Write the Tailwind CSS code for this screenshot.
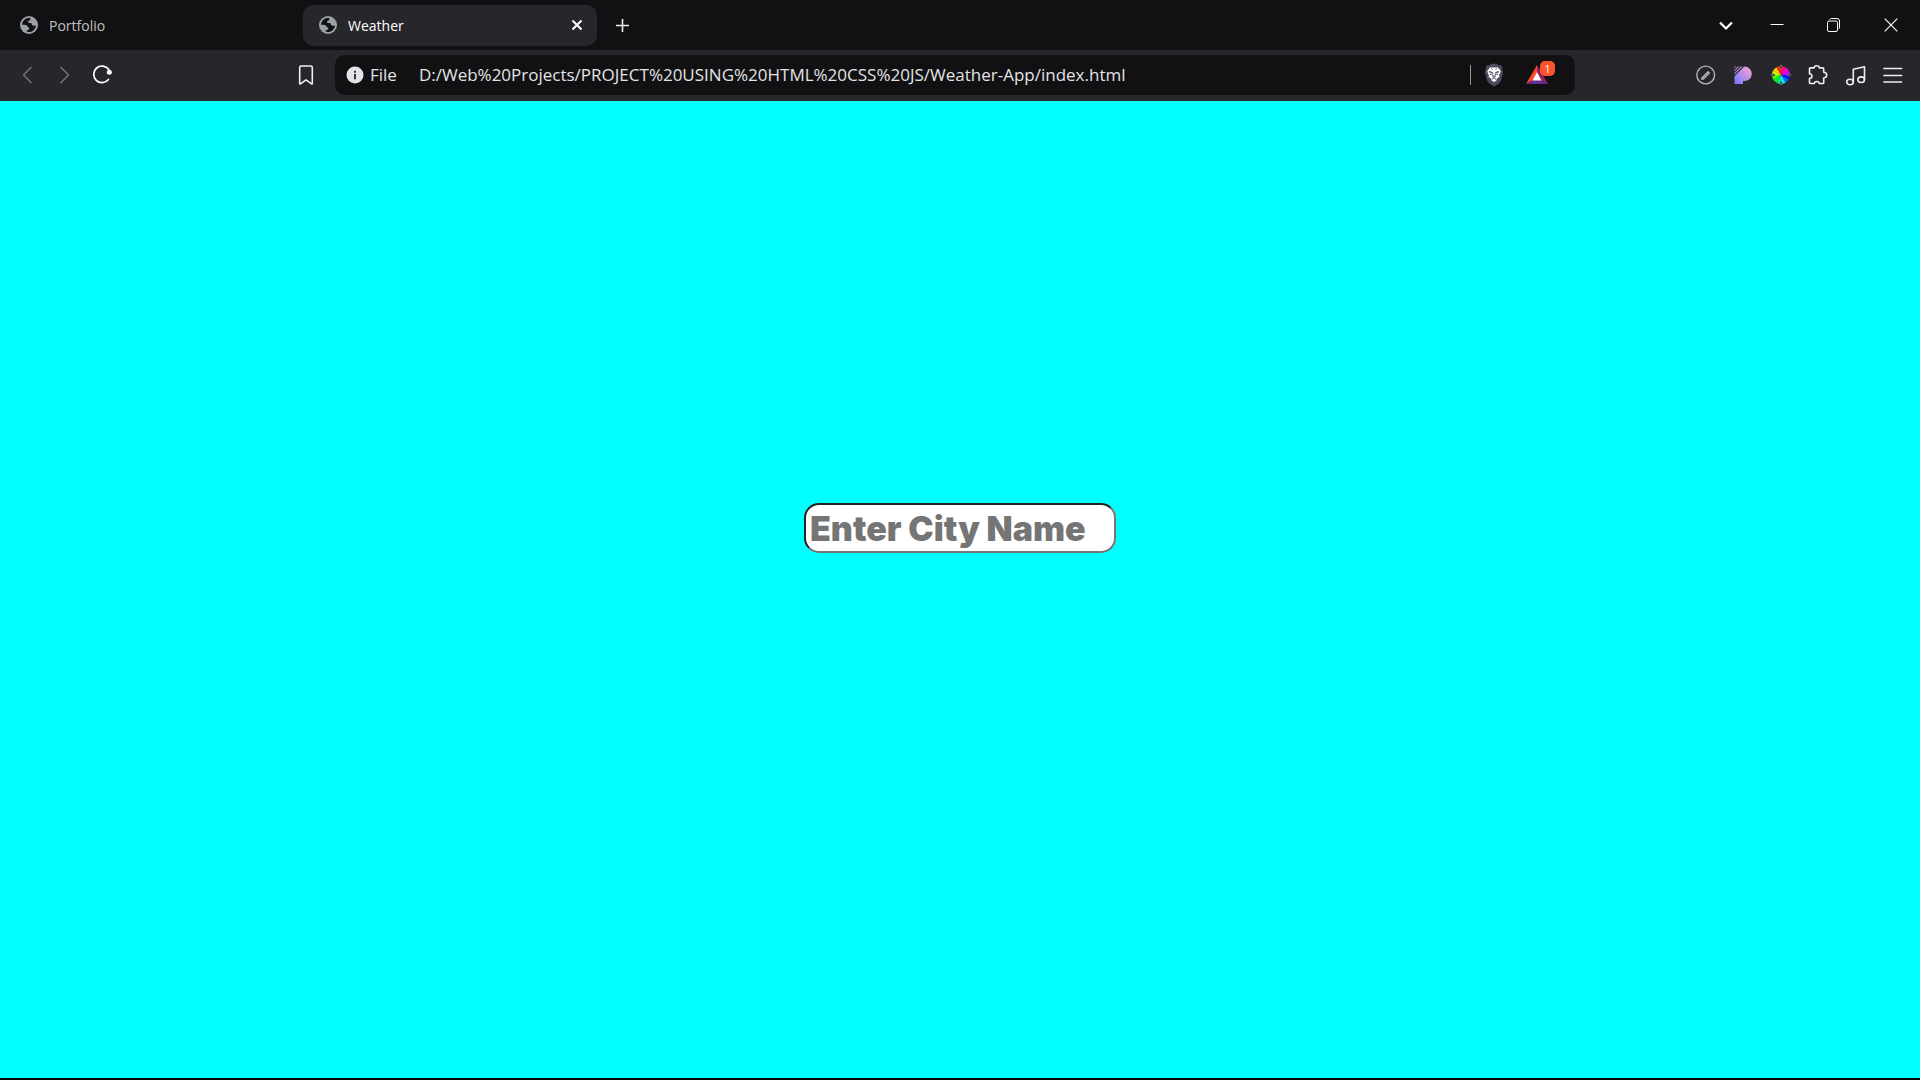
<!DOCTYPE html>
<html lang="en">
<head>
<meta charset="utf-8">
<title>Weather</title>
<script src="https://cdn.jsdelivr.net/npm/@tailwindcss/browser@4"></script>
</head>
<body class="flex min-h-screen flex-col border-b-2 border-black bg-[#00ffff] font-['Open_Sans',sans-serif] text-white">
<svg class="hidden" aria-hidden="true">
  <symbol id="globe" viewBox="0 0 18 18">
    <circle cx="9" cy="9" r="9" fill="#9aa0a6"/>
    <path d="M8.2 2.1C10 1.7 10.8 2.300 10.400 3.500 10 4.900 8 4.500 7.900 5.700 7.800 6.700 9 7.100 10.400 7.100 12.200 7.200 11.600 8.900 12.700 9.500 13.800 10.100 14.700 9.700 15.900 9.400 15.700 12.600 13.200 15.400 10.200 15.900 8.600 16.100 7.500 15.900 6.600 15.500 6.300 14.500 7.300 14.100 8.500 13.700 9.700 13.200 9.700 12 8.600 11.600 7.400 11.200 7.700 9.800 6.500 9.300 5.100 8.700 3.500 8.900 2.100 8.800 2.200 5.300 4.900 2.600 8.200 2.100Z" fill="#111113"/>
  </symbol>
</svg>
<header>
  <div class="flex h-[50px] items-center bg-[#111113] pr-[22px]">
    <button class="flex h-[41px] w-[303px] items-center gap-[11px] pl-5 text-[14px] text-[#c0c0c2]">
      <svg class="size-[18px]"><use href="#globe"/></svg>Portfolio
    </button>
    <div class="flex h-[41px] w-[294px] items-center justify-between rounded-[10px] bg-[#26262b] pr-[14px] pl-4">
      <button class="flex items-center gap-[11px] text-[14px]"><svg class="size-[18px]"><use href="#globe"/></svg>Weather</button>
      <button aria-label="Close tab"><svg class="size-3" viewBox="0 0 12 12" fill="none" stroke="#fff" stroke-width="2"><path d="M1.500 1.500l9 9M10.500 1.500l-9 9"/></svg></button>
    </div>
    <button aria-label="New tab" class="ml-[18px]"><svg class="size-[15px]" viewBox="0 0 15 15" fill="none" stroke="#eee" stroke-width="1.600"><path d="M7.500 1v13M1 7.500h13"/></svg></button>
    <div class="ml-auto flex items-center">
      <button aria-label="Search tabs" class="mr-[37px]"><svg class="size-[14px]" viewBox="0 0 14 14" fill="none" stroke="#fff" stroke-width="2.200"><path d="M1 4.500l6 6 6-6"/></svg></button>
      <button aria-label="Minimize" class="mr-[42px]"><svg class="size-[14px]" viewBox="0 0 14 14"><path d="M.5 6h13v1h-13z" fill="#fff"/></svg></button>
      <button aria-label="Restore" class="mr-11"><svg class="size-[14px]" viewBox="0 0 14 14" fill="none" stroke="#fff"><rect x="1.500" y="3" width="10" height="10.500" rx="1.500"/><path d="M3.500 1.500q.5-1 2-1H11a2.500 2.500 0 0 1 2.500 2.500v6q0 1.500-1 2"/></svg></button>
      <button aria-label="Close window"><svg class="size-[14px]" viewBox="0 0 14 14" fill="none" stroke="#fff" stroke-width="1.100"><path d="M.7.700l12.600 12.600M13.300.700L.7 13.300"/></svg></button>
    </div>
  </div>
  <div class="flex h-[51px] items-center bg-[#26262b] pr-4 pb-px">
    <nav class="flex w-[335px] items-center pr-[19px] pl-[17px]">
      <button aria-label="Back" class="mr-[17px]"><svg class="size-5" viewBox="0 0 20 20" fill="none" stroke="#77777b" stroke-width="1.400"><path d="M14.500 2L6.500 10l8 8"/></svg></button>
      <button aria-label="Forward" class="mr-[17px]"><svg class="size-5" viewBox="0 0 20 20" fill="none" stroke="#77777b" stroke-width="1.400"><path d="M6.500 2l8 8-8 8"/></svg></button>
      <button aria-label="Reload"><svg class="size-[22px]" viewBox="0 0 22 22" fill="none" stroke="#fff" stroke-width="1.700" stroke-linecap="round"><path d="M17.800 5.500A8.300 8.300 0 1 0 17.500 15.500"/><circle cx="18.300" cy="8.300" r="2.500" fill="#fff" stroke="none"/></svg></button>
      <button aria-label="Bookmark this page" class="ml-auto"><svg class="size-5" viewBox="0 0 20 20" fill="none" stroke="#f0f0f0" stroke-width="1.600" stroke-linejoin="round"><path d="M3.700 2.500q0-1.500 1.500-1.500h9.600q1.500 0 1.500 1.500v16q0 .8-.8.300L10 14.900l-5.500 3.900q-.8.500-.8-.3z"/></svg></button>
    </nav>
    <div class="flex h-10 flex-1 items-center rounded-[10px] bg-[#111113] pr-[26px] pl-[11px] text-[17px] text-[#e4e4e6]">
      <button aria-label="Site information: File" class="flex items-center gap-[6px]"><svg class="size-[18px]" viewBox="0 0 18 18"><circle cx="9" cy="9" r="8.500" fill="#e4e4e8"/><path d="M8 4.800h2v2H8zM8 8h2v5.200H8z" fill="#333337"/></svg><span>File</span></button>
      <input aria-label="Address" class="ml-[22px] min-w-0 flex-1 bg-transparent outline-none" value="D:/Web%20Projects/PROJECT%20USING%20HTML%20CSS%20JS/Weather-App/index.html">
      <div class="mr-[13px] h-5 w-px bg-[#99999b]"></div>
      <button aria-label="Brave Shields"><svg class="h-6 w-5" viewBox="0 0 20 24"><path d="M7 .7h6l1.500 1.600 2-.2 2 2.200-.5 1.400 1.300 3.300-2.400 8.700-2 2.700L10 23.500l-4.900-3.100-2-2.700L.7 9 2 5.700l-.5-1.400 2-2.200 2 .2z" fill="#4a4b5c"/><path d="M6.500 4l2 .5h3l2-.5 2.500 3 .8 1.500-1.800 4 .5 1.500-2.200 1-.8 2.500-2.500 1.500-2.500-1.500-.8-2.500-2.200-1 .5-1.500-1.800-4L4 7z" fill="#fff"/><path d="M5 8.700l3.500 1M15 8.700l-3.500 1M6 11.500l1.800-.5M14 11.500l-1.800-.5" fill="none" stroke="#4a4b5c" stroke-width="1.200"/><path d="M8.700 13.200h2.600L10 14.600zM7.600 16.600l2.400-1.800 2.400 1.800" fill="none" stroke="#4a4b5c" stroke-width="1"/><path d="M8.700 9.500v3.500M11.300 9.500v3.500M7 4.500L8.500 6.800M13 4.500L11.500 6.800" stroke="#4a4b5c" stroke-width=".8"/></svg></button>
      <button aria-label="Brave Rewards, 1 notification" class="relative ml-[21px]"><svg class="h-5 w-6" viewBox="0 0 24 20"><path d="M12 0L1 19l7-4 4-7z" fill="#ff4724"/><path d="M12 0l11 19-7-4-4-7z" fill="#9e1f63"/><path d="M1 19h22l-7-4H8z" fill="#662d91"/><path d="M12 7l4.500 8.500h-9z" fill="#fff"/></svg><span class="absolute -top-1 right-[-6px] flex h-[15px] w-[15px] items-center justify-center rounded-[5px] bg-[#fb542b] text-[10px] leading-none text-white">1</span></button>
    </div>
    <div class="ml-[120px] flex w-[209px] items-center justify-between">
      <button aria-label="Page editor"><svg class="size-[22px]" viewBox="0 0 22 22"><circle cx="10.700" cy="11" r="8.900" fill="none" stroke="#b5b5b7" stroke-width="1.400"/><path d="M6.300 13.500l6.700-6.700 2.400 2.300-6.700 6.600-2.600.2z" fill="#aaaaac"/><path d="M8.500 12.500l1 1M10 11l1 1M11.500 9.500l1 1" stroke="#68686c" stroke-width=".7"/></svg></button>
      <button aria-label="Pattern extension"><svg class="size-[22px]" viewBox="0 0 22 22"><defs><linearGradient id="pg" x1="0" y1="1" x2="1" y2="0"><stop stop-color="#7177ff"/><stop offset="1" stop-color="#ffa8d0"/></linearGradient></defs><path d="M2.500 2.500h10a7.300 7.300 0 0 1 0 14.600h-1.500V20H2.500z" fill="url(#pg)"/><path d="M2 5.500l3.500-3.500M2 8.700l6.700-6.700M2 11.900l9.900-9.900" stroke="#26262b" stroke-width="1.100"/></svg></button>
      <button aria-label="Colour picker"><svg class="size-[22px]" viewBox="0 0 22 22"><path d="M11 11V2a9 9 0 0 1 4.500 1.200z" fill="#f06"/><path d="M11 11l4.500-7.800a9 9 0 0 1 3.300 3.300z" fill="#f0c"/><path d="M11 11l7.800-4.500A9 9 0 0 1 20 11z" fill="#c0f"/><path d="M11 11h9a9 9 0 0 1-1.200 4.500z" fill="#20f"/><path d="M11 11l7.800 4.500a9 9 0 0 1-3.300 3.300z" fill="#06f"/><path d="M11 11l4.500 7.800A9 9 0 0 1 11 20z" fill="#0ee"/><path d="M11 11v9a9 9 0 0 1-4.500-1.200z" fill="#0e8"/><path d="M11 11l-4.500 7.800a9 9 0 0 1-3.300-3.300z" fill="#0e2"/><path d="M11 11l-7.800 4.500A9 9 0 0 1 2 11z" fill="#5f0"/><path d="M11 11H2a9 9 0 0 1 1.200-4.500z" fill="#cf0"/><path d="M11 11L3.200 6.500a9 9 0 0 1 3.300-3.300z" fill="#fc0"/><path d="M11 11L6.500 3.200A9 9 0 0 1 11 2z" fill="#f20"/><path d="M11 .8l1.200 2.400L11 5.600 9.800 3.200zM11 16.400l1.200 2.400-1.200 2.400-1.200-2.400zM.8 11l2.400-1.200L5.600 11l-2.400 1.200zM16.400 11l2.400-1.200 2.400 1.200-2.400 1.200z" fill="#222" stroke="#999" stroke-width=".6"/></svg></button>
      <button aria-label="Extensions"><svg class="size-[22px]" viewBox="0 0 22 22" fill="none" stroke="#eee" stroke-width="1.600" stroke-linejoin="round"><path d="M2.500 4.700q0-.8.800-.8h3.700c.3-2.900 5.100-2.900 5.400 0h3.500q.8 0 .8.800v3.600c4 .2 4 5.400 0 5.700v4.700q0 .8-.8.800h-3.600c-.3-2.700-4.700-2.700-5 0H3.300q-.8 0-.8-.8v-4.200c3.200-.3 3.200-4.300 0-4.700z"/></svg></button>
      <button aria-label="Media playlist"><svg class="size-[22px]" viewBox="0 0 22 22" fill="none" stroke="#eee" stroke-width="1.600" stroke-linejoin="round"><ellipse cx="5" cy="18" rx="3.300" ry="2.800"/><ellipse cx="16.200" cy="15.700" rx="3.300" ry="2.800"/><path d="M8.300 18V5.200l11.200-2.400v12.900"/></svg></button>
      <button aria-label="Menu"><svg class="size-[22px]" viewBox="0 0 22 22" stroke="#eee" stroke-width="1.700" stroke-linecap="round"><path d="M2 4.500h17.500M2 11.500h17.500M2 18h17.500"/></svg></button>
    </div>
  </div>
</header>
<main class="flex flex-1 justify-center pt-[402px]">
  <input aria-label="City name" placeholder="Enter City Name" class="h-[50px] w-[312px] rounded-[15px] border-2 border-t-[#222] border-r-[#767676] border-b-[#767676] border-l-[#222] bg-white px-1 font-['Inter',sans-serif] text-[34px] font-black text-black outline-none placeholder:text-[#757575]">
</main>
</body>
</html>
